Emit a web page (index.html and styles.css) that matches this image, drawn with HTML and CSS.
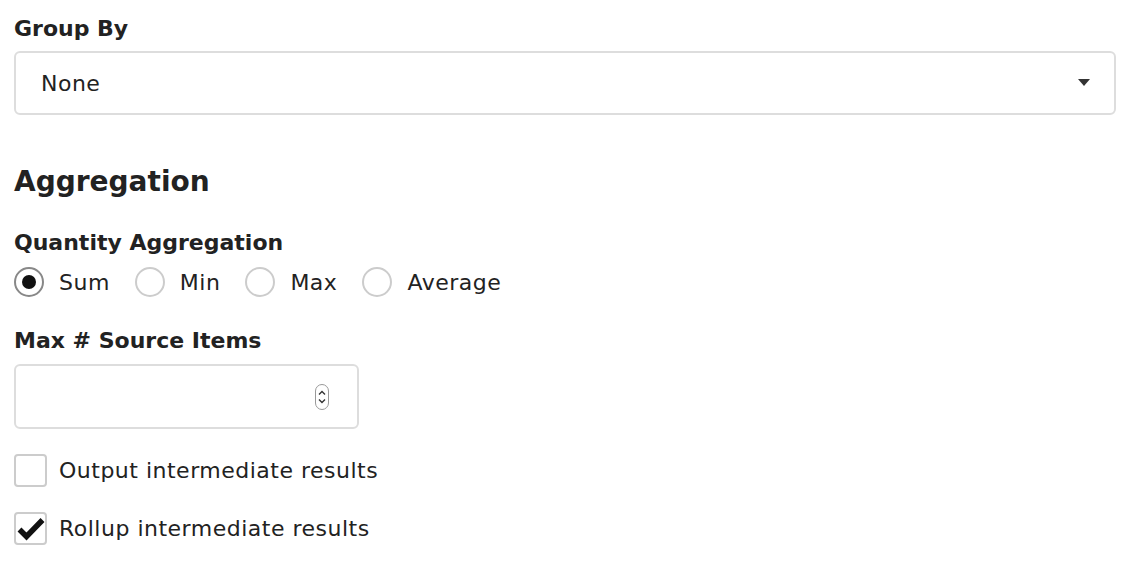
FILE: index.html
```html
<!DOCTYPE html>
<html>
<head>
    <meta charset="UTF-8">
    <title>Aggregation</title>
    <link rel="stylesheet" href="styles.css">
</head>
<body>
<div class="form">
    <div class="field">
        <label class="label">Group By</label>
        <div class="select">
            <span>None</span>
            <svg class="caret" width="12" height="8" viewBox="0 0 12 8"><path d="M0 0h12L6 7z" fill="#333"/></svg>
        </div>
    </div>

    <h2 class="heading">Aggregation</h2>

    <div class="field">
        <label class="label">Quantity Aggregation</label>
        <div class="radios">
            <label class="radio"><span class="dot on"></span>Sum</label>
            <label class="radio"><span class="dot"></span>Min</label>
            <label class="radio"><span class="dot"></span>Max</label>
            <label class="radio"><span class="dot"></span>Average</label>
        </div>
    </div>

    <div class="field">
        <label class="label">Max # Source Items</label>
        <div class="number">
            <svg class="spin" width="14" height="26" viewBox="0 0 14 26">
                <rect x="0.5" y="0.5" width="13" height="25" rx="6.5" fill="#fff" stroke="#999"/>
                <path d="M4 10.5l3-3 3 3M4 15.5l3 3 3-3" fill="none" stroke="#333" stroke-width="1.4"/>
            </svg>
        </div>
    </div>

    <label class="check"><span class="box"></span>Output intermediate results</label>
    <label class="check"><span class="box">
        <svg width="28" height="24" viewBox="0 0 28 24"><path d="M2.5 12.5l7 7L25.5 3" fill="none" stroke="#111" stroke-width="5.5"/></svg>
    </span>Rollup intermediate results</label>
</div>
</body>
</html>
```
FILE: styles.css
```css
body{margin:0;background:#fff;color:#222;font-family:"DejaVu Sans",Verdana,sans-serif;}
.form{padding:16px 24px 0 14px;}
.field{margin-bottom:31px;}
.field:first-child{margin-bottom:0;}
.label{display:block;font-size:22px;font-weight:bold;margin-bottom:10px;}
.select{height:64px;border:2px solid #ddd;border-radius:6px;display:flex;align-items:center;box-sizing:border-box;
    justify-content:space-between;padding:0 24px 0 25px;font-size:22px;letter-spacing:0.5px;}
.heading{font-size:28px;font-weight:bold;margin:50px 0 32px;}
.radios{display:flex;align-items:center;gap:25px;font-size:22px;letter-spacing:0.5px;margin-top:12px;}
.radio{display:flex;align-items:center;gap:15px;}
.dot{width:26px;height:26px;border:2px solid #ccc;border-radius:50%;
    display:flex;align-items:center;justify-content:center;}
.dot.on{border-color:#888;}
.dot.on::after{content:"";width:14px;height:14px;border-radius:50%;background:#111;}
.number{height:65px;width:345px;border:2px solid #ddd;border-radius:6px;display:flex;align-items:center;
    justify-content:flex-end;padding-right:28px;box-sizing:border-box;margin-top:11px;}
.check{display:flex;align-items:center;gap:12px;font-size:22px;letter-spacing:0.5px;margin-top:-6px;}
.check + .check{margin-top:25px;}
.box{width:29px;height:29px;border:2px solid #ccc;border-radius:4px;display:flex;align-items:center;justify-content:center;}
```
